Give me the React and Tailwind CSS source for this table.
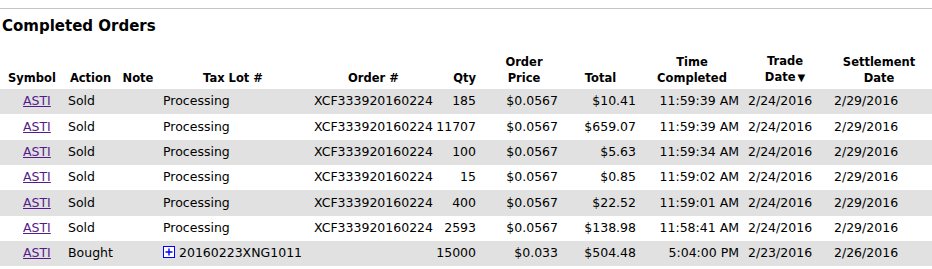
import React from 'react'

const rows = [
  { action: 'Sold', lot: 'Processing', order: 'XCF333920160224', qty: '185', price: '$0.0567', total: '$10.41', time: '11:59:39 AM', trade: '2/24/2016', settle: '2/29/2016' },
  { action: 'Sold', lot: 'Processing', order: 'XCF333920160224', qty: '11707', price: '$0.0567', total: '$659.07', time: '11:59:39 AM', trade: '2/24/2016', settle: '2/29/2016' },
  { action: 'Sold', lot: 'Processing', order: 'XCF333920160224', qty: '100', price: '$0.0567', total: '$5.63', time: '11:59:34 AM', trade: '2/24/2016', settle: '2/29/2016' },
  { action: 'Sold', lot: 'Processing', order: 'XCF333920160224', qty: '15', price: '$0.0567', total: '$0.85', time: '11:59:02 AM', trade: '2/24/2016', settle: '2/29/2016' },
  { action: 'Sold', lot: 'Processing', order: 'XCF333920160224', qty: '400', price: '$0.0567', total: '$22.52', time: '11:59:01 AM', trade: '2/24/2016', settle: '2/29/2016' },
  { action: 'Sold', lot: 'Processing', order: 'XCF333920160224', qty: '2593', price: '$0.0567', total: '$138.98', time: '11:58:41 AM', trade: '2/24/2016', settle: '2/29/2016' },
  { action: 'Bought', lot: '20160223XNG1011', expand: true, order: '', qty: '15000', price: '$0.033', total: '$504.48', time: '5:04:00 PM', trade: '2/23/2016', settle: '2/26/2016' },
]

function PlusBox() {
  return (
    <svg width="12" height="12" viewBox="0 0 12 12" className="inline-block mr-[4px] align-[-1px]">
      <rect x="0.5" y="0.5" width="11" height="11" fill="#ffffff" stroke="#0000ff" />
      <path d="M6 2.5v7M2.5 6h7" stroke="#0000ff" strokeWidth="1.4" />
    </svg>
  )
}

export default function App() {
  const th = "align-bottom font-bold pb-[3px] leading-[16px] text-[11.5px]"
  return (
    <div className="w-[932px] h-[269px] overflow-hidden bg-white text-black font-['DejaVu_Sans',Verdana,sans-serif]">
      <div className="pt-[8px]">
        <div className="h-px bg-[#c4c4c4]" />
      </div>
      <h2 className="mt-[8px] ml-[2px] text-[15px] font-bold leading-[18px]">Completed Orders</h2>

      <table className="mt-[18px] table-fixed border-collapse w-[932px] text-[12.5px]">
        <colgroup>
          <col className="w-[64px]" />
          <col className="w-[53px]" />
          <col className="w-[42px]" />
          <col className="w-[148px]" />
          <col className="w-[127px]" />
          <col className="w-[46px]" />
          <col className="w-[88px]" />
          <col className="w-[76px]" />
          <col className="w-[100px]" />
          <col className="w-[82px]" />
          <col className="w-[106px]" />
        </colgroup>
        <thead>
          <tr>
            <th className={th + " text-center"}>Symbol</th>
            <th className={th + " text-center"}>Action</th>
            <th className={th + " text-center"}>Note</th>
            <th className={th + " text-center"}>Tax Lot #</th>
            <th className={th + " text-center pl-[6px]"}>Order #</th>
            <th className={th + " text-right pr-[4px]"}>Qty</th>
            <th className={th + " text-center"}>Order<br />Price</th>
            <th className={th + " text-center pr-[11px]"}>Total</th>
            <th className={th + " text-center pr-[4px]"}>Time<br />Completed</th>
            <th className={th + " text-center"}>Trade<br />Date<span className="text-[10px] ml-[2px]">▼</span></th>
            <th className={th + " text-center"}>Settlement<br />Date</th>
          </tr>
        </thead>
        <tbody>
          {rows.map((r, i) => (
            <tr key={i} className={"h-[25.33px] " + (i % 2 === 0 ? 'bg-[#e1e1e1]' : 'bg-white')}>
              <td className="pl-[23px] text-left">
                <a href="#" className="text-[#551a8b] underline">ASTI</a>
              </td>
              <td className="pl-[4px]">{r.action}</td>
              <td />
              <td className="pl-[4px] whitespace-nowrap">{r.expand && <PlusBox />}{r.lot}</td>
              <td className="pl-[7px] whitespace-nowrap">{r.order}</td>
              <td className="text-right pr-[4px]">{r.qty}</td>
              <td className="text-right pr-[10px]">{r.price}</td>
              <td className="text-right pr-[8px]">{r.total}</td>
              <td className="text-right pr-[5px] whitespace-nowrap">{r.time}</td>
              <td className="pl-[4px]">{r.trade}</td>
              <td className="pl-[8px]">{r.settle}</td>
            </tr>
          ))}
        </tbody>
      </table>
    </div>
  )
}
